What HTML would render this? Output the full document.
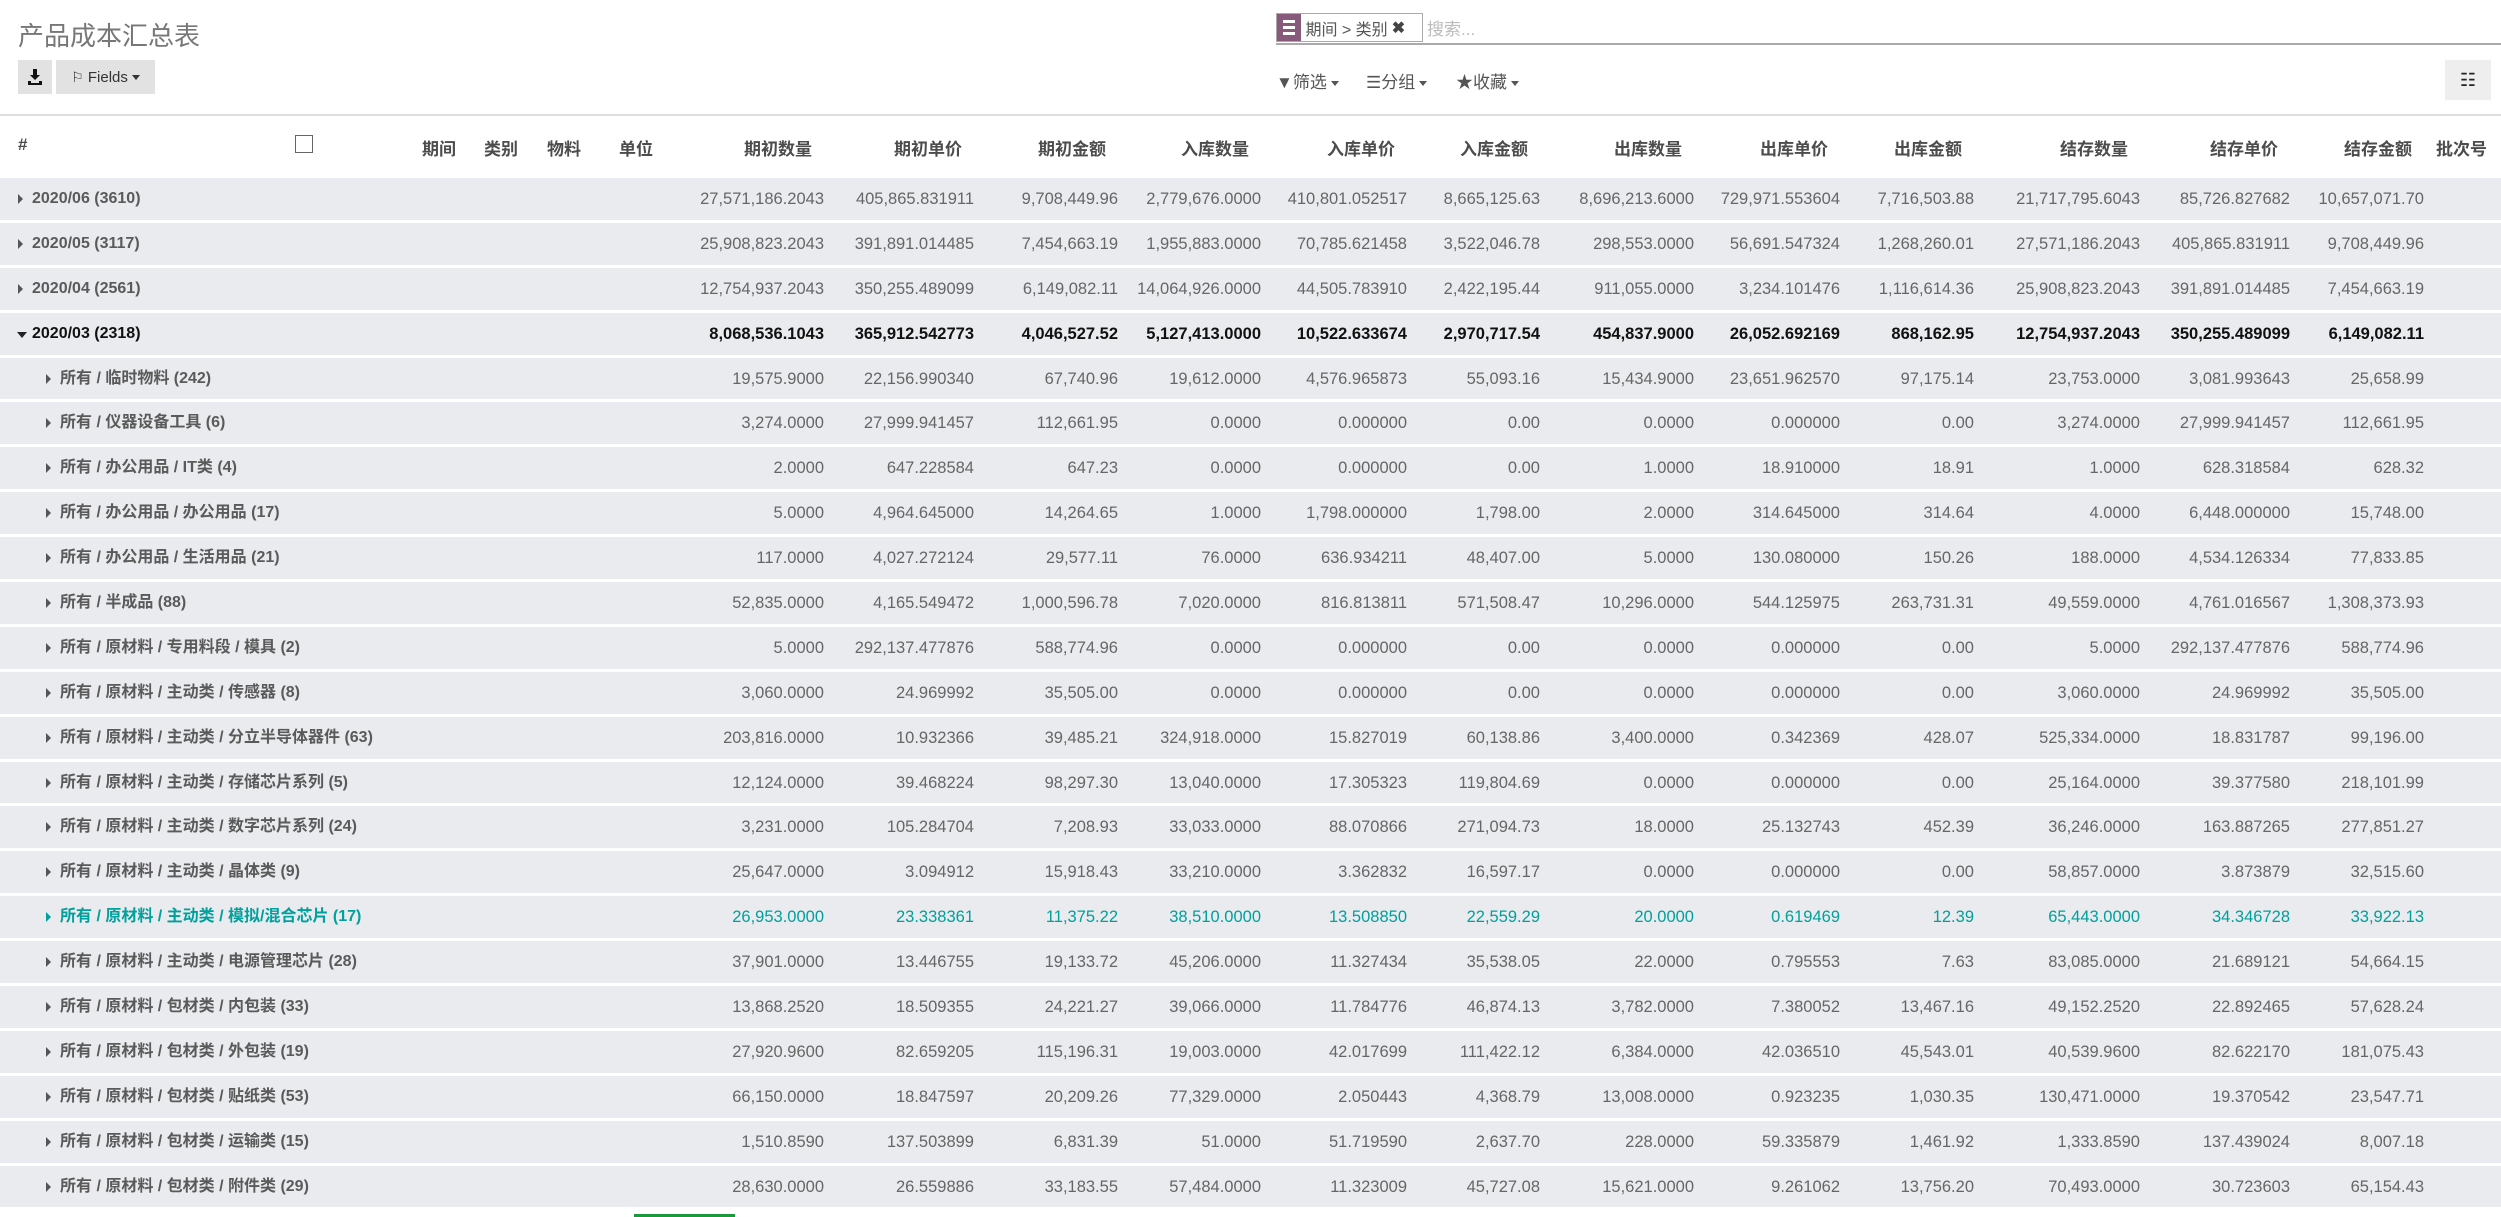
<!DOCTYPE html>
<html><head><meta charset="utf-8">
<style>
*{margin:0;padding:0;box-sizing:border-box}
body{width:2501px;height:1217px;overflow:hidden;background:#fff;font-family:"Liberation Sans","Noto Sans CJK SC",sans-serif;color:#666;position:relative}
.title{position:absolute;left:18px;top:16px;font-size:26px;color:#777}
.btn{position:absolute;top:60px;height:34px;background:#e2e2e2;font-size:15px;color:#333;display:flex;align-items:center;justify-content:center}
.facet{position:absolute;left:1276px;top:13px;height:29px;width:147px;border:1px solid #aaa;display:flex;align-items:center;font-size:16px;color:#555}
.facet .ic{width:24px;height:27px;background:#875a7b;display:flex;flex-direction:column;justify-content:center;align-items:center;gap:3px}
.facet .ic span{display:block;width:12px;height:3px;background:#fff}
.sline{position:absolute;left:1276px;right:0;top:43px;height:2px;background:#aaa}
.ph{position:absolute;left:1427px;top:15px;font-size:17px;color:#bbb}
.fb{position:absolute;top:68px;font-size:17px;color:#555}
.tri{display:inline-block;width:0;height:0;border-left:4px solid transparent;border-right:4px solid transparent;border-top:5px solid #555;vertical-align:middle;margin-left:4px}
.hline{position:absolute;left:0;right:0;top:114px;height:2px;background:#ddd}
.hdr{position:absolute;top:133px;left:0;height:28px;font-size:17px;font-weight:bold;color:#4c4c4c}
.g{display:grid;grid-template-columns:650px 174px 150px 144px 143px 146px 133px 154px 146px 134px 166px 150px 134px}
.hdr .g div{text-align:right;padding-right:12px}
.rows{position:absolute;top:178px;left:0;width:2501px}
.r{height:41.9px;margin-bottom:3px;background:#e9ebee;font-size:16.5px;align-items:center;color:#666;line-height:20px}
.r i{font-style:normal;text-align:right;white-space:nowrap;display:block}
.r b{white-space:nowrap;padding-left:32px;position:relative;font-size:16px;color:#5a5a5a;display:block;line-height:20px;margin-top:0}
.r b:before{content:"";position:absolute;left:18px;top:50%;margin-top:-5px;border-top:5px solid transparent;border-bottom:5px solid transparent;border-left:5px solid #555}
.r.s b{padding-left:60px}
.r.s b:before{left:46px}
.r.o b:before{left:17px;margin-top:-2px;border-left:5px solid transparent;border-right:5px solid transparent;border-top:6px solid #222;border-bottom:0}
.r.o{color:#111;font-weight:bold}
.r.o b{color:#111}
.r.t,.r.t b{color:#00a09d}
.r.t b:before{border-left-color:#00a09d}
</style></head><body>
<div class="title">产品成本汇总表</div>
<div class="btn" style="left:18px;width:34px"><svg width="14" height="16" viewBox="0 0 14 16"><path d="M5 0h4v6h3l-5 5-5-5h3z M0 12h3v2h8v-2h3v4H0z" fill="#111"/></svg></div>
<div class="btn" style="left:56px;width:99px"><span style="font-size:14px">⚐</span>&nbsp;Fields<span class="tri" style="border-top-color:#333"></span></div>
<div class="facet"><div class="ic"><span></span><span></span><span></span></div>&nbsp;期间 &gt; 类别 <b style="margin-left:4px;color:#444">✖</b></div>
<div class="ph">搜索...</div>
<div class="sline"></div>
<div class="fb" style="left:1276px">▼筛选<span class="tri"></span></div>
<div class="fb" style="left:1366px">☰分组<span class="tri"></span></div>
<div class="fb" style="left:1456px">★收藏<span class="tri"></span></div>
<div class="btn" style="left:2445px;width:46px;height:40px;background:#eee;font-size:18px;color:#222">☷</div>
<div class="hline"></div>
<div class="hdr" style="width:2501px">
<div style="position:absolute;left:18px;top:2px">#</div>
<div style="position:absolute;left:295px;top:2px;width:18px;height:18px;border:1.5px solid #666"></div>
<div style="position:absolute;left:422px;top:2px">期间</div>
<div style="position:absolute;left:484px;top:2px">类别</div>
<div style="position:absolute;left:547px;top:2px">物料</div>
<div style="position:absolute;left:619px;top:2px">单位</div>
<div style="position:absolute;left:2436px;top:2px">批次号</div>
<div class="g" style="position:absolute;left:0;top:2px"><div></div><div>期初数量</div><div>期初单价</div><div>期初金额</div><div>入库数量</div><div>入库单价</div><div>入库金额</div><div>出库数量</div><div>出库单价</div><div>出库金额</div><div>结存数量</div><div>结存单价</div><div>结存金额</div></div>
</div>
<div class="rows">
<div class="r g"><b>2020/06 (3610)</b><i>27,571,186.2043</i><i>405,865.831911</i><i>9,708,449.96</i><i>2,779,676.0000</i><i>410,801.052517</i><i>8,665,125.63</i><i>8,696,213.6000</i><i>729,971.553604</i><i>7,716,503.88</i><i>21,717,795.6043</i><i>85,726.827682</i><i>10,657,071.70</i></div>
<div class="r g"><b>2020/05 (3117)</b><i>25,908,823.2043</i><i>391,891.014485</i><i>7,454,663.19</i><i>1,955,883.0000</i><i>70,785.621458</i><i>3,522,046.78</i><i>298,553.0000</i><i>56,691.547324</i><i>1,268,260.01</i><i>27,571,186.2043</i><i>405,865.831911</i><i>9,708,449.96</i></div>
<div class="r g"><b>2020/04 (2561)</b><i>12,754,937.2043</i><i>350,255.489099</i><i>6,149,082.11</i><i>14,064,926.0000</i><i>44,505.783910</i><i>2,422,195.44</i><i>911,055.0000</i><i>3,234.101476</i><i>1,116,614.36</i><i>25,908,823.2043</i><i>391,891.014485</i><i>7,454,663.19</i></div>
<div class="r g o"><b>2020/03 (2318)</b><i>8,068,536.1043</i><i>365,912.542773</i><i>4,046,527.52</i><i>5,127,413.0000</i><i>10,522.633674</i><i>2,970,717.54</i><i>454,837.9000</i><i>26,052.692169</i><i>868,162.95</i><i>12,754,937.2043</i><i>350,255.489099</i><i>6,149,082.11</i></div>
<div class="r g s"><b>所有 / 临时物料 (242)</b><i>19,575.9000</i><i>22,156.990340</i><i>67,740.96</i><i>19,612.0000</i><i>4,576.965873</i><i>55,093.16</i><i>15,434.9000</i><i>23,651.962570</i><i>97,175.14</i><i>23,753.0000</i><i>3,081.993643</i><i>25,658.99</i></div>
<div class="r g s"><b>所有 / 仪器设备工具 (6)</b><i>3,274.0000</i><i>27,999.941457</i><i>112,661.95</i><i>0.0000</i><i>0.000000</i><i>0.00</i><i>0.0000</i><i>0.000000</i><i>0.00</i><i>3,274.0000</i><i>27,999.941457</i><i>112,661.95</i></div>
<div class="r g s"><b>所有 / 办公用品 / IT类 (4)</b><i>2.0000</i><i>647.228584</i><i>647.23</i><i>0.0000</i><i>0.000000</i><i>0.00</i><i>1.0000</i><i>18.910000</i><i>18.91</i><i>1.0000</i><i>628.318584</i><i>628.32</i></div>
<div class="r g s"><b>所有 / 办公用品 / 办公用品 (17)</b><i>5.0000</i><i>4,964.645000</i><i>14,264.65</i><i>1.0000</i><i>1,798.000000</i><i>1,798.00</i><i>2.0000</i><i>314.645000</i><i>314.64</i><i>4.0000</i><i>6,448.000000</i><i>15,748.00</i></div>
<div class="r g s"><b>所有 / 办公用品 / 生活用品 (21)</b><i>117.0000</i><i>4,027.272124</i><i>29,577.11</i><i>76.0000</i><i>636.934211</i><i>48,407.00</i><i>5.0000</i><i>130.080000</i><i>150.26</i><i>188.0000</i><i>4,534.126334</i><i>77,833.85</i></div>
<div class="r g s"><b>所有 / 半成品 (88)</b><i>52,835.0000</i><i>4,165.549472</i><i>1,000,596.78</i><i>7,020.0000</i><i>816.813811</i><i>571,508.47</i><i>10,296.0000</i><i>544.125975</i><i>263,731.31</i><i>49,559.0000</i><i>4,761.016567</i><i>1,308,373.93</i></div>
<div class="r g s"><b>所有 / 原材料 / 专用料段 / 模具 (2)</b><i>5.0000</i><i>292,137.477876</i><i>588,774.96</i><i>0.0000</i><i>0.000000</i><i>0.00</i><i>0.0000</i><i>0.000000</i><i>0.00</i><i>5.0000</i><i>292,137.477876</i><i>588,774.96</i></div>
<div class="r g s"><b>所有 / 原材料 / 主动类 / 传感器 (8)</b><i>3,060.0000</i><i>24.969992</i><i>35,505.00</i><i>0.0000</i><i>0.000000</i><i>0.00</i><i>0.0000</i><i>0.000000</i><i>0.00</i><i>3,060.0000</i><i>24.969992</i><i>35,505.00</i></div>
<div class="r g s"><b>所有 / 原材料 / 主动类 / 分立半导体器件 (63)</b><i>203,816.0000</i><i>10.932366</i><i>39,485.21</i><i>324,918.0000</i><i>15.827019</i><i>60,138.86</i><i>3,400.0000</i><i>0.342369</i><i>428.07</i><i>525,334.0000</i><i>18.831787</i><i>99,196.00</i></div>
<div class="r g s"><b>所有 / 原材料 / 主动类 / 存储芯片系列 (5)</b><i>12,124.0000</i><i>39.468224</i><i>98,297.30</i><i>13,040.0000</i><i>17.305323</i><i>119,804.69</i><i>0.0000</i><i>0.000000</i><i>0.00</i><i>25,164.0000</i><i>39.377580</i><i>218,101.99</i></div>
<div class="r g s"><b>所有 / 原材料 / 主动类 / 数字芯片系列 (24)</b><i>3,231.0000</i><i>105.284704</i><i>7,208.93</i><i>33,033.0000</i><i>88.070866</i><i>271,094.73</i><i>18.0000</i><i>25.132743</i><i>452.39</i><i>36,246.0000</i><i>163.887265</i><i>277,851.27</i></div>
<div class="r g s"><b>所有 / 原材料 / 主动类 / 晶体类 (9)</b><i>25,647.0000</i><i>3.094912</i><i>15,918.43</i><i>33,210.0000</i><i>3.362832</i><i>16,597.17</i><i>0.0000</i><i>0.000000</i><i>0.00</i><i>58,857.0000</i><i>3.873879</i><i>32,515.60</i></div>
<div class="r g s t"><b>所有 / 原材料 / 主动类 / 模拟/混合芯片 (17)</b><i>26,953.0000</i><i>23.338361</i><i>11,375.22</i><i>38,510.0000</i><i>13.508850</i><i>22,559.29</i><i>20.0000</i><i>0.619469</i><i>12.39</i><i>65,443.0000</i><i>34.346728</i><i>33,922.13</i></div>
<div class="r g s"><b>所有 / 原材料 / 主动类 / 电源管理芯片 (28)</b><i>37,901.0000</i><i>13.446755</i><i>19,133.72</i><i>45,206.0000</i><i>11.327434</i><i>35,538.05</i><i>22.0000</i><i>0.795553</i><i>7.63</i><i>83,085.0000</i><i>21.689121</i><i>54,664.15</i></div>
<div class="r g s"><b>所有 / 原材料 / 包材类 / 内包装 (33)</b><i>13,868.2520</i><i>18.509355</i><i>24,221.27</i><i>39,066.0000</i><i>11.784776</i><i>46,874.13</i><i>3,782.0000</i><i>7.380052</i><i>13,467.16</i><i>49,152.2520</i><i>22.892465</i><i>57,628.24</i></div>
<div class="r g s"><b>所有 / 原材料 / 包材类 / 外包装 (19)</b><i>27,920.9600</i><i>82.659205</i><i>115,196.31</i><i>19,003.0000</i><i>42.017699</i><i>111,422.12</i><i>6,384.0000</i><i>42.036510</i><i>45,543.01</i><i>40,539.9600</i><i>82.622170</i><i>181,075.43</i></div>
<div class="r g s"><b>所有 / 原材料 / 包材类 / 贴纸类 (53)</b><i>66,150.0000</i><i>18.847597</i><i>20,209.26</i><i>77,329.0000</i><i>2.050443</i><i>4,368.79</i><i>13,008.0000</i><i>0.923235</i><i>1,030.35</i><i>130,471.0000</i><i>19.370542</i><i>23,547.71</i></div>
<div class="r g s"><b>所有 / 原材料 / 包材类 / 运输类 (15)</b><i>1,510.8590</i><i>137.503899</i><i>6,831.39</i><i>51.0000</i><i>51.719590</i><i>2,637.70</i><i>228.0000</i><i>59.335879</i><i>1,461.92</i><i>1,333.8590</i><i>137.439024</i><i>8,007.18</i></div>
<div class="r g s"><b>所有 / 原材料 / 包材类 / 附件类 (29)</b><i>28,630.0000</i><i>26.559886</i><i>33,183.55</i><i>57,484.0000</i><i>11.323009</i><i>45,727.08</i><i>15,621.0000</i><i>9.261062</i><i>13,756.20</i><i>70,493.0000</i><i>30.723603</i><i>65,154.43</i></div>
</div>
<div style="position:absolute;left:634px;top:1214px;width:101px;height:3px;background:#1a9a3a"></div>
</body></html>
